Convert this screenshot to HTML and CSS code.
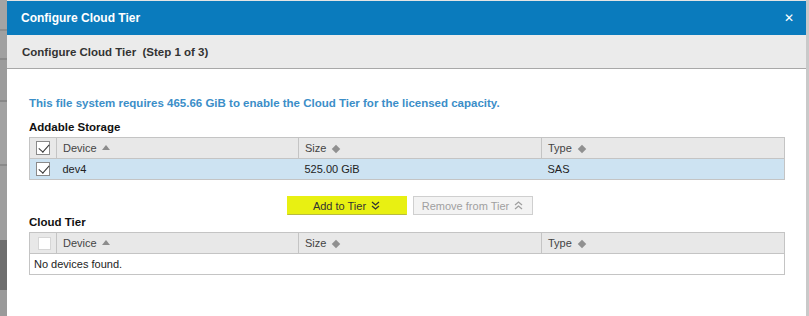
FILE: index.html
```html
<!DOCTYPE html>
<html>
<head>
<meta charset="utf-8">
<link rel="stylesheet" href="styles.css">
</head>
<body>
<div class="page">
  <div class="backdrop-left"></div>
  <div class="dialog">
    <div class="titlebar">
      <span class="title">Configure Cloud Tier</span>
      <span class="close">&#x2715;</span>
    </div>
    <div class="subheader">Configure Cloud Tier&nbsp; (Step 1 of 3)</div>
    <div class="content">
      <p class="info">This file system requires 465.66 GiB to enable the Cloud Tier for the licensed capacity.</p>
      <h3 class="section">Addable Storage</h3>
      <table class="grid">
        <colgroup><col class="c-check"><col class="c-dev"><col class="c-size"><col class="c-type"></colgroup>
        <thead>
          <tr>
            <th class="chk"><span class="cb checked"></span></th>
            <th>Device <span class="sort-up"></span></th>
            <th>Size <span class="sort-both"></span></th>
            <th>Type <span class="sort-both"></span></th>
          </tr>
        </thead>
        <tbody>
          <tr class="selected">
            <td class="chk"><span class="cb checked"></span></td>
            <td>dev4</td>
            <td>525.00 GiB</td>
            <td>SAS</td>
          </tr>
        </tbody>
      </table>
      <div class="actions">
        <button class="btn btn-add">Add to Tier
          <svg class="chev" width="9" height="9" viewBox="0 0 9 9"><path d="M1 1 L4.5 4 L8 1 M1 5 L4.5 8 L8 5" fill="none" stroke="currentColor" stroke-width="1.3"/></svg>
        </button>
        <button class="btn btn-remove" disabled>Remove from Tier
          <svg class="chev" width="9" height="9" viewBox="0 0 9 9"><path d="M1 4 L4.5 1 L8 4 M1 8 L4.5 5 L8 8" fill="none" stroke="currentColor" stroke-width="1.3"/></svg>
        </button>
      </div>
      <h3 class="section section-tight">Cloud Tier</h3>
      <table class="grid">
        <colgroup><col class="c-check"><col class="c-dev"><col class="c-size"><col class="c-type"></colgroup>
        <thead>
          <tr>
            <th class="chk"><span class="cb empty"></span></th>
            <th>Device <span class="sort-up"></span></th>
            <th>Size <span class="sort-both"></span></th>
            <th>Type <span class="sort-both"></span></th>
          </tr>
        </thead>
        <tbody>
          <tr>
            <td colspan="4" class="empty-msg">No devices found.</td>
          </tr>
        </tbody>
      </table>
    </div>
  </div>
  <div class="backdrop-right"></div>
</div>
</body>
</html>
```
FILE: styles.css
```css
* { box-sizing: border-box; }
html, body { margin: 0; padding: 0; }
body {
  font-family: "Liberation Sans", Arial, sans-serif;
  font-size: 11px;
  color: #222;
  background: #ffffff;
  width: 809px;
  height: 316px;
  overflow: hidden;
}
.page {
  display: flex;
  height: 316px;
  background: #e4e4e4;
}
.backdrop-left {
  width: 7px;
  flex: none;
  background: linear-gradient(to bottom,
    #a4a4a4 0, #a4a4a4 29px, #8e8e8e 29px, #8e8e8e 31px,
    #a0a0a0 31px, #a0a0a0 58px, #8a8a8a 58px, #8a8a8a 60px,
    #9c9c9c 60px, #9c9c9c 100px, #888 100px, #888 102px,
    #a2a2a2 102px, #a2a2a2 164px, #8a8a8a 164px, #8a8a8a 166px,
    #9e9e9e 166px, #9e9e9e 240px, #6e6e6e 240px, #6e6e6e 290px,
    #9a9a9a 290px, #9a9a9a 316px);
}
.backdrop-right {
  width: 3px;
  flex: none;
  background: #c9c9c9;
}
.dialog {
  width: 799px;
  flex: none;
  margin-top: 1px;
  background: #fff;
  display: flex;
  flex-direction: column;
}
.titlebar {
  height: 34px;
  background: #0a7bbd;
  color: #fff;
  display: flex;
  align-items: center;
  justify-content: space-between;
  padding: 0 12px 0 14px;
}
.title {
  font-weight: bold;
  font-size: 12px;
}
.close {
  font-size: 12px;
}
.subheader {
  height: 34px;
  background: #ebebeb;
  border-bottom: 1px solid #a8a8a8;
  display: flex;
  align-items: center;
  padding-left: 15px;
  font-weight: bold;
  font-size: 11.5px;
  color: #333;
}
.content {
  padding: 0 21px 0 22px;
}
.info {
  margin: 27px 0 0 0;
  font-weight: bold;
  color: #3b8ec8;
  font-size: 11.5px;
  line-height: 14px;
}
.section {
  margin: 10px 0 3px 0;
  font-size: 11.5px;
  line-height: 14px;
  font-weight: bold;
  color: #111;
}
.section-tight {
  margin-top: 0;
  margin-bottom: 3px;
}
.grid {
  width: 756px;
  border-collapse: collapse;
  table-layout: fixed;
  border: 1px solid #c4c4c4;
  color: #333;
}
.c-check { width: 27px; }
.c-dev { width: 242px; }
.c-size { width: 243px; }
.c-type { width: 243px; }
.grid th {
  background: #e8e8e8;
  font-weight: normal;
  text-align: left;
  height: 21px;
  padding: 0 6px;
  border-left: 1px solid #c4c4c4;
  border-bottom: 1px solid #c4c4c4;
  color: #444;
}
.grid td {
  height: 21px;
  padding: 0 6px;
  color: #222;
}
.grid th.chk, .grid td.chk {
  padding: 0 0 0 6px;
}
.grid th:first-child { border-left: none; }
.selected td { background: #cde3f2; }
.cb {
  display: inline-block;
  width: 14px;
  height: 14px;
  border: 1px solid #8a8a8a;
  background: #fff;
  vertical-align: middle;
  position: relative;
}
.cb.empty {
  border-color: #d6d6d6;
  width: 13px;
  height: 13px;
  margin-left: 2px;
}
.cb.checked::after {
  content: "";
  position: absolute;
  left: 1px;
  top: 1px;
  width: 9px;
  height: 5px;
  border-left: 1.3px solid #333;
  border-bottom: 1.3px solid #333;
  transform: translate(1px, 1px) rotate(-48deg);
  transform-origin: center;
}
.sort-up {
  display: inline-block;
  width: 0;
  height: 0;
  border-left: 4px solid transparent;
  border-right: 4px solid transparent;
  border-bottom: 5px solid #8c8c8c;
  vertical-align: 2px;
  margin-left: 2px;
}
.sort-both {
  display: inline-block;
  width: 6px;
  height: 6px;
  background: #909090;
  transform: rotate(45deg);
  vertical-align: 0px;
  margin-left: 4px;
}
.actions {
  display: flex;
  justify-content: center;
  gap: 6px;
  margin: 16px 0 0 0;
  padding-left: 5px;
}
.btn {
  font-family: "Liberation Sans", Arial, sans-serif;
  font-size: 11px;
  height: 19px;
  width: 120px;
  padding: 0;
  display: inline-flex;
  align-items: center;
  justify-content: center;
  gap: 5px;
  white-space: nowrap;
  border: 1px solid #cfcfcf;
  border-radius: 0;
}
.btn-add {
  background: #e8f012;
  border-color: #e8f012;
  border-bottom-color: #b8bb40;
  color: #333;
}
.btn-remove {
  background: #f3f3f3;
  color: #a0a0a0;
}
.chev { display: block; }
.empty-msg {
  padding-left: 4px !important;
  color: #222;
}
```
